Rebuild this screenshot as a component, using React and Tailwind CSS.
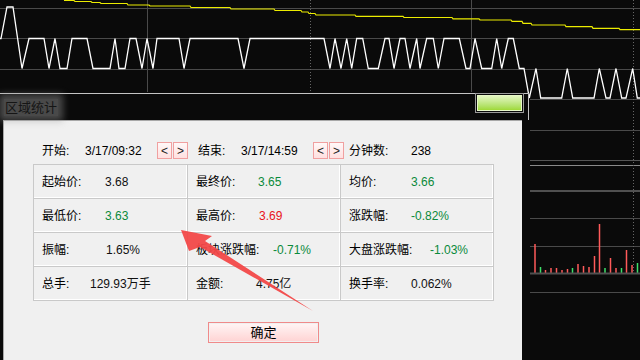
import React from "react";

const T = 38.5;
const M = 68.5;
const L = 98;

// white wave, page coordinates
const wave = [
  [0, T], [1, T], [7, 7], [13, 7], [22, M], [29, T], [44, T], [49, M], [55, T], [60, M], [67, M],
  [72, T], [87, T], [93, M], [110, M], [115, T], [119, M], [125, M], [130, T], [136, T], [142, M],
  [147, T], [153, M], [157, T], [179, T], [184, M], [190, T], [238, T], [244, M], [250, T],
  [324, T], [330, M], [335, T], [341, M], [346.7, T], [351.7, M], [356.7, T], [362.7, T], [368.3, M],
  [378.3, M], [385, T], [389, T], [394, M], [400, T], [405, T], [410, M], [416.7, T], [420, M],
  [426.7, T], [433.3, T], [438.3, M], [444, T], [459.3, T], [466, M], [470, M], [475, T], [481.7, M],
  [491.7, M], [496.7, T], [501.7, M], [508.3, T], [513.3, T], [519.3, M], [524, M], [529.3, L],
  [536, M], [540.7, L], [561.7, L], [567.3, M], [572.7, L], [594, L], [599.3, M], [606, L], [610, L],
  [616, M], [621.7, L], [626, L], [632.7, M], [637.3, L], [640, L],
];

const yellow = [
  [64, 0.5], [74, 0.5], [75, 1.5], [91, 1.5], [92, 2.5], [100, 2.5], [101, 3.5], [127, 3.5], [128, 5],
  [149, 5], [150, 6], [190, 6], [191, 7.5], [230, 7.5], [231, 9], [274, 9], [275, 10.5], [301, 10.5],
  [302, 12], [308, 12], [309, 13.5], [315, 13.5], [316, 15], [355, 15], [356, 16.3], [403, 16.3],
  [404, 17.5], [452, 17.5], [453, 18.8], [479, 18.8], [480, 20], [511, 20], [512, 21.3], [522, 21.3],
  [523, 23.3], [531, 23.3], [532, 25], [565, 25], [566, 26.7], [592, 26.7], [593, 28.3], [619, 28.3],
  [620, 29.7], [640, 29.7],
];

const pts = (a) => a.map(([x, y]) => `${x},${y}`).join(" ");

const bars = [
  [535, 244, "r"], [540.5, 267, "g"], [545.5, 270, "r"], [551, 268, "r"], [556.5, 268, "r"],
  [562, 270, "r"], [567.5, 269, "r"], [572.5, 268, "g"], [578, 264, "r"], [583.5, 266, "r"],
  [589, 267, "r"], [594.5, 256, "r"], [599.5, 224, "r"], [605, 268, "g"], [610.5, 258, "r"],
  [616, 268, "r"], [621.5, 268, "g"], [626.5, 250, "r"], [632, 265, "r"], [637.5, 263, "g"],
];

const cells = [
  { k: "起始价:", v: "3.68", lw: "w-[63px]", c: "text-[#101010]" },
  { k: "最终价:", v: "3.65", lw: "w-[62px]", c: "text-[#0b8a3b]" },
  { k: "均价:", v: "3.66", lw: "w-[62px]", c: "text-[#0b8a3b]" },
  { k: "最低价:", v: "3.63", lw: "w-[63px]", c: "text-[#0b8a3b]" },
  { k: "最高价:", v: "3.69", lw: "w-[63px]", c: "text-[#e8131b]" },
  { k: "涨跌幅:", v: "-0.82%", lw: "w-[62px]", c: "text-[#0b8a3b]" },
  { k: "振幅:", v: "1.65%", lw: "w-[64px]", c: "text-[#101010]" },
  { k: "板块涨跌幅:", v: "-0.71%", lw: "w-[77px]", c: "text-[#0b8a3b]" },
  { k: "大盘涨跌幅:", v: "-1.03%", lw: "w-[81px]", c: "text-[#0b8a3b]" },
  { k: "总手:", v: "129.93万手", lw: "w-[48px]", c: "text-[#101010]" },
  { k: "金额:", v: "4.75亿", lw: "w-[60px]", c: "text-[#101010]" },
  { k: "换手率:", v: "0.062%", lw: "w-[62px]", c: "text-[#101010]" },
];

function StepButton({ children }) {
  return (
    <div className="w-[15px] h-[17px] border border-[#f0a0a0] bg-gradient-to-b from-[#fff8f8] to-[#ffe0e0] flex items-center justify-center text-[12px] leading-none text-[#222]">
      {children}
    </div>
  );
}

export default function App() {
  return (
    <div className="relative w-[640px] h-[360px] overflow-hidden bg-[#0a0a0a] font-['Liberation_Sans','Noto_Sans_CJK_SC',sans-serif] text-[12px]">
      {/* top chart */}
      <svg className="block" width="640" height="93" viewBox="0 0 640 93">
        <line x1="0" y1="8.5" x2="640" y2="8.5" stroke="#4a4a4a" />
        <line x1="0" y1="38.5" x2="640" y2="38.5" stroke="#4a4a4a" />
        <line x1="0" y1="69.5" x2="640" y2="69.5" stroke="#4a4a4a" />
        <line x1="147.5" y1="0" x2="147.5" y2="92" stroke="#4a4a4a" />
        <line x1="471.5" y1="0" x2="471.5" y2="92" stroke="#4a4a4a" />
        <line x1="310.5" y1="0" x2="310.5" y2="92" stroke="#666" strokeDasharray="1 2" />
        <line x1="633.5" y1="0" x2="633.5" y2="93" stroke="#666" strokeDasharray="1 2" />
        <polyline points={pts(yellow)} fill="none" stroke="#ecec00" strokeWidth="1.2" />
        <polyline points={pts(wave)} fill="none" stroke="#ffffff" strokeWidth="1.3" />
      </svg>

      <div className="flex">
        {/* left: title bar + dialog */}
        <div className="w-[529px]">
          <div className="h-[27px] border-t border-r border-[#c4c4c4] flex items-start">
            <span className="ml-[4px] mt-[5px] px-px h-[17px] leading-[17px] text-[13px] text-[#151515] bg-[rgba(150,150,150,0.45)] shadow-[0_0_7px_5px_rgba(150,150,150,0.45)]">
              区域统计
            </span>
            <div className="ml-auto mr-[4px] -mt-px w-[49px] h-[20px] border border-[#9a9a9a] p-px">
              <div className="w-full h-full border border-[#e8f8c8] bg-gradient-to-b from-[#e4f6c0] to-[#9fd935]" />
            </div>
          </div>

          <div className="ml-[3px] w-[519px] h-[240px] bg-[#f0f0f0] border-t border-l border-[#a8a8a8]">
            {/* range row */}
            <div className="pt-[21px] pl-[38px] flex items-center h-[38px] text-black">
              <span className="w-[43px]">开始:</span>
              <span className="w-[72px]">3/17/09:32</span>
              <div className="flex gap-px">
                <StepButton>&lt;</StepButton>
                <StepButton>&gt;</StepButton>
              </div>
              <span className="ml-[10px] w-[43px]">结束:</span>
              <span className="w-[72px]">3/17/14:59</span>
              <div className="flex gap-px">
                <StepButton>&lt;</StepButton>
                <StepButton>&gt;</StepButton>
              </div>
              <span className="ml-[5px] w-[62px]">分钟数:</span>
              <span>238</span>
            </div>

            {/* stats table */}
            <div className="mt-[5px] ml-[29px] w-[461px] grid grid-cols-[154px_153px_153px] border-t border-l border-[#c9c9c9]">
              {cells.map((c) => (
                <div
                  key={c.k}
                  className="h-[34px] flex items-center pl-[8px] border-r border-b border-[#c9c9c9] shadow-[inset_-1px_-1px_0_#ffffff]"
                >
                  <span className={`${c.lw} text-black`}>{c.k}</span>
                  <span className={c.c}>{c.v}</span>
                </div>
              ))}
            </div>

            <div className="mt-[21px] ml-[204px] w-[111px] h-[21px] border border-[#f08a8a] p-px">
              <div className="w-full h-full bg-gradient-to-b from-[#fff4f4] to-[#ffd4d4] flex items-center justify-center text-[13px] text-black">
                确定
              </div>
            </div>
          </div>
        </div>

        {/* right chart */}
        <svg width="111" height="267" viewBox="529 93 111 267">
          <line x1="530" y1="99.5" x2="640" y2="99.5" stroke="#4a4a4a" />
          <line x1="530" y1="130.5" x2="640" y2="130.5" stroke="#4a4a4a" />
          <line x1="530" y1="160.5" x2="640" y2="160.5" stroke="#555" />
          <line x1="530" y1="165.5" x2="640" y2="165.5" stroke="#8a8a8a" />
          <line x1="530" y1="191" x2="640" y2="191" stroke="#505050" strokeWidth="2" />
          <line x1="530" y1="218.5" x2="640" y2="218.5" stroke="#4a4a4a" />
          <line x1="530" y1="246.5" x2="640" y2="246.5" stroke="#4a4a4a" />
          <line x1="530" y1="292.5" x2="640" y2="292.5" stroke="#4a4a4a" />
          <line x1="633.5" y1="93" x2="633.5" y2="273" stroke="#666" strokeDasharray="1 2" />
          {bars.map(([x, y, c]) => (
            <line key={x} x1={x} y1={y} x2={x} y2="273" stroke={c === "r" ? "#ff5a5a" : "#3ee06a"} strokeWidth="1.5" />
          ))}
          <line x1="530" y1="273.5" x2="640" y2="273.5" stroke="#505050" strokeWidth="2" />
          <polyline points={pts(wave)} fill="none" stroke="#ffffff" strokeWidth="1.3" />
        </svg>
      </div>

      {/* annotation arrow */}
      <svg className="absolute inset-0 pointer-events-none" width="640" height="360" viewBox="0 0 640 360">
        <polygon
          points="181,230 212,236 205,241 313,311 200,247 189,251"
          fill="#f24848"
          opacity="0.95"
        />
      </svg>
    </div>
  );
}
